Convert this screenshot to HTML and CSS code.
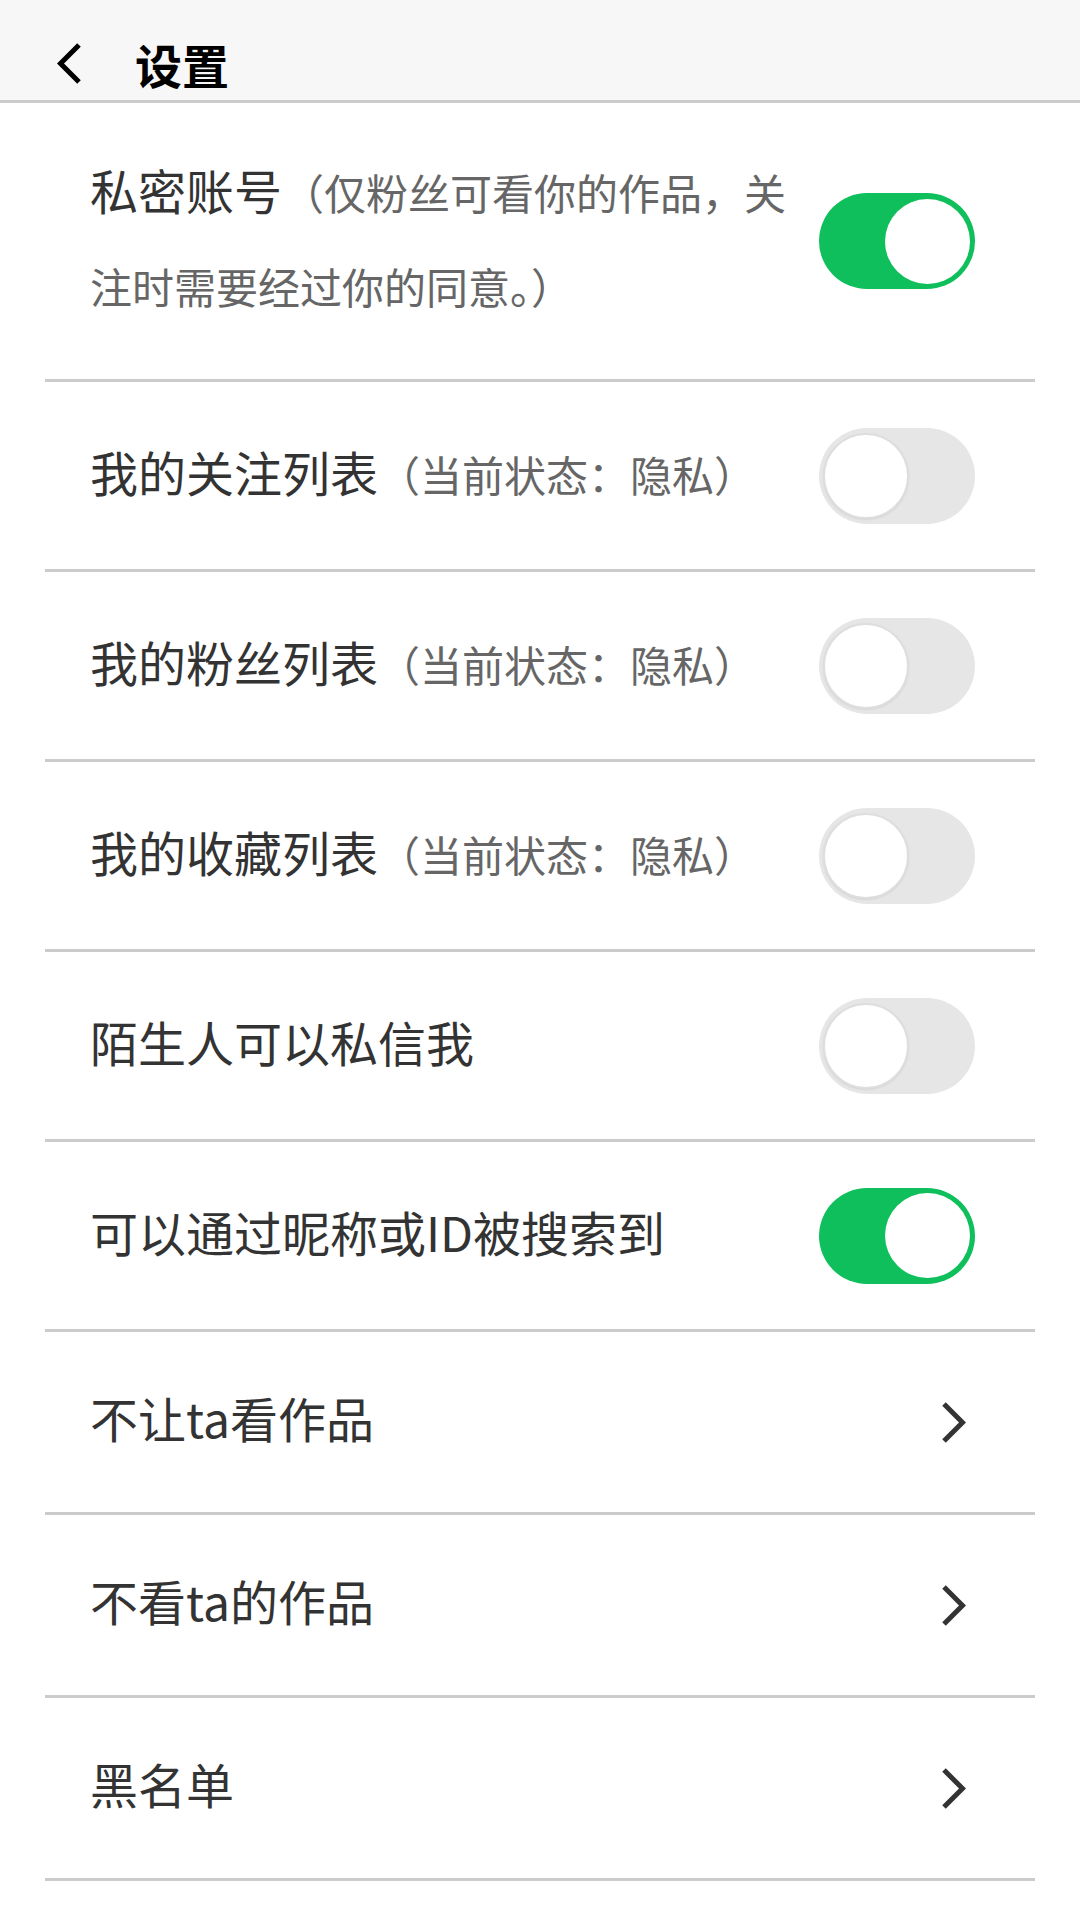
FILE: index.html
```html
<!DOCTYPE html>
<html lang="zh-CN">
<head>
<meta charset="utf-8">
<title>设置</title>
<link rel="stylesheet" href="styles.css">
</head>
<body>
<header class="header">
  <svg class="back" viewBox="0 0 25 41" width="25" height="41"><polyline points="22,2 3.5,20.5 22,39" fill="none" stroke="#000" stroke-width="5"/></svg>
  <span class="title">设置</span>
</header>
<div class="list">
  <div class="row row-first">
    <div class="label"><span class="main">私密账号</span><span class="sub">（仅粉丝可看你的作品，关注时需要经过你的同意。）</span></div>
    <div class="switch on"><span class="knob"></span></div>
  </div>
  <div class="row">
    <div class="label"><span class="main">我的关注列表</span><span class="sub">（当前状态：隐私）</span></div>
    <div class="switch"><span class="knob"></span></div>
  </div>
  <div class="row">
    <div class="label"><span class="main">我的粉丝列表</span><span class="sub">（当前状态：隐私）</span></div>
    <div class="switch"><span class="knob"></span></div>
  </div>
  <div class="row">
    <div class="label"><span class="main">我的收藏列表</span><span class="sub">（当前状态：隐私）</span></div>
    <div class="switch"><span class="knob"></span></div>
  </div>
  <div class="row">
    <div class="label"><span class="main">陌生人可以私信我</span></div>
    <div class="switch"><span class="knob"></span></div>
  </div>
  <div class="row">
    <div class="label"><span class="main">可以通过昵称或ID被搜索到</span></div>
    <div class="switch on"><span class="knob"></span></div>
  </div>
  <div class="row row-link">
    <div class="label"><span class="main">不让ta看作品</span></div>
    <svg class="arrow" viewBox="0 0 25 41" width="25" height="41"><polyline points="3,2 21.5,20.5 3,39" fill="none" stroke="#333" stroke-width="5"/></svg>
  </div>
  <div class="row row-link">
    <div class="label"><span class="main">不看ta的作品</span></div>
    <svg class="arrow" viewBox="0 0 25 41" width="25" height="41"><polyline points="3,2 21.5,20.5 3,39" fill="none" stroke="#333" stroke-width="5"/></svg>
  </div>
  <div class="row row-link">
    <div class="label"><span class="main">黑名单</span></div>
    <svg class="arrow" viewBox="0 0 25 41" width="25" height="41"><polyline points="3,2 21.5,20.5 3,39" fill="none" stroke="#333" stroke-width="5"/></svg>
  </div>
</div>
</body>
</html>
```

FILE: styles.css
```css
* { box-sizing: border-box; }

html, body {
  margin: 0;
  padding: 0;
  background: #ffffff;
  font-family: "Noto Sans CJK SC", "Noto Sans", sans-serif;
}

.header {
  height: 103px;
  padding: 26px 0 0 57px;
  background: #f7f7f7;
  border-bottom: 3px solid #cbcbcb;
  display: flex;
  align-items: center;
}

.back {
  display: block;
  flex: none;
}

.title {
  margin-left: 53px;
  font-size: 47px;
  font-weight: 700;
  color: #000;
  line-height: 1;
}

.list {
  margin: 0 45px;
}

.row {
  height: 190px;
  padding: 0 60px 0 45px;
  border-bottom: 3px solid #cbcbcb;
  display: flex;
  align-items: center;
  gap: 20px;
}

.row-first {
  height: 279px;
}

.row-link {
  height: 183px;
  padding-right: 69px;
}

.label {
  flex: 1;
  min-width: 0;
  font-size: 48px;
  line-height: 94px;
  padding-bottom: 10px;
}

.main {
  font-size: 48px;
  line-height: 1;
  color: #333333;
}

.sub {
  font-size: 42px;
  line-height: 1;
  color: #666666;
}

.switch {
  flex: none;
  width: 156px;
  height: 96px;
  border-radius: 48px;
  background: #e6e6e6;
  display: flex;
  align-items: center;
  justify-content: flex-start;
  padding: 0 4px;
}

.switch.on {
  background: #0fbf5c;
  justify-content: flex-end;
  padding: 0 5px;
}

.knob {
  width: 86px;
  height: 86px;
  border-radius: 50%;
  background: #ffffff;
  border: 2px solid #dedede;
  box-shadow: 0 1px 2px rgba(0, 0, 0, 0.08);
}

.switch.on .knob {
  border: none;
  width: 85px;
  height: 85px;
  box-shadow: none;
}

.arrow {
  display: block;
  flex: none;
}
```
